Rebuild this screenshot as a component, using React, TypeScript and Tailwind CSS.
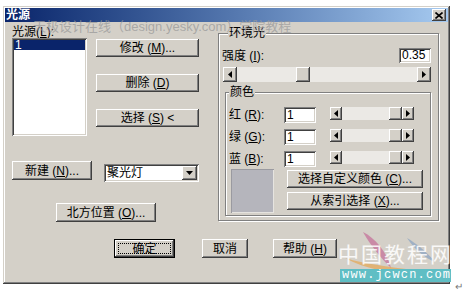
import React from "react"

const raised = "bg-[#d4d0c8] shadow-[inset_-1px_-1px_#404040,inset_1px_1px_#ffffff,inset_-2px_-2px_#808080,inset_2px_2px_#d4d0c8]"
const sunken = "bg-white shadow-[inset_1px_1px_#808080,inset_-1px_-1px_#ffffff,inset_2px_2px_#404040,inset_-2px_-2px_#d4d0c8]"
const etched = "border border-[#808080] shadow-[inset_1px_1px_#ffffff,1px_1px_#ffffff]"

function Btn({ w, h, children }: { w: string; h: string; children: React.ReactNode }) {
  return (
    <div className={`${raised} ${w} ${h} flex items-center justify-center text-[12px] leading-none text-black`}>
      {children}
    </div>
  )
}

function Arrow({ dir }: { dir: "l" | "r" | "d" }) {
  const pts = dir === "l" ? "4,0 0,3.5 4,7" : dir === "r" ? "0,0 4,3.5 0,7" : "0,0 7,0 3.5,4"
  const vb = dir === "d" ? "0 0 7 4" : "0 0 4 7"
  return (
    <svg viewBox={vb} className={dir === "d" ? "w-[7px] h-[4px]" : "w-[4px] h-[7px]"}>
      <polygon points={pts} fill="#000" />
    </svg>
  )
}

function Scroll({ w, h, arrow, before, thumb }: { w: string; h: string; arrow: string; before: string; thumb: string }) {
  return (
    <div className={`${w} ${h} flex bg-[#ebe9e5]`}>
      <div className={`${raised} ${arrow} h-full flex items-center justify-center`}><Arrow dir="l" /></div>
      <div className={before} />
      <div className={`${raised} ${thumb} h-full`} />
      <div className="flex-1" />
      <div className={`${raised} ${arrow} h-full flex items-center justify-center`}><Arrow dir="r" /></div>
    </div>
  )
}

function ColorRow({ label, k }: { label: string; k: string }) {
  return (
    <div className="flex items-start h-[16px]">
      <div className="w-[55px] text-[12px] leading-[16px]">{label} (<u>{k}</u>):</div>
      <div className={`${sunken} w-[32px] h-[16px] pl-[3px] text-[12px] leading-[16px]`}>1</div>
      <div className="ml-[14px]">
        <Scroll w="w-[84px]" h="h-[13px]" arrow="w-[12px]" before="w-[47px]" thumb="w-[13px]" />
      </div>
    </div>
  )
}

export default function App() {
  return (
    <div className="relative w-[465px] h-[296px] bg-white overflow-hidden font-['Liberation_Sans','Noto_Sans_CJK_SC',sans-serif] text-black">
      <div className="ml-[3px] mt-[6px] w-[447px] h-[278px] p-[2px] bg-[#d4d0c8] shadow-[inset_-1px_-1px_#404040,inset_1px_1px_#d4d0c8,inset_-2px_-2px_#808080,inset_2px_2px_#ffffff] flex flex-col">
        {/* title bar */}
        <div className="h-[14px] bg-linear-to-r from-[#0a246a] to-[#a6caf0] flex items-center justify-between pl-[1px] pr-[2px]">
          <span className="text-white font-bold text-[12px] leading-[14px]">光源</span>
          <div className={`${raised} w-[14px] h-[12px] flex items-center justify-center`}>
            <svg viewBox="0 0 8 7" className="w-[8px] h-[7px]">
              <path d="M0.5 0.5 L7.5 6.5 M7.5 0.5 L0.5 6.5" stroke="#000" strokeWidth="1.6" />
            </svg>
          </div>
        </div>

        <div className="flex">
          {/* left column */}
          <div className="w-[213px] flex flex-col">
            <div className="pl-[7px] pt-[4px] h-[16px] text-[12px] leading-[12px]">光源(<u>L</u>):</div>
            <div className="flex pl-[7px] gap-[9px]">
              <div className={`${sunken} w-[75px] h-[98px] p-[2px]`}>
                <div className="bg-[#0a246a] text-white text-[12px] leading-[10px] h-[10px] pl-[1px]">1</div>
              </div>
              <div className="pt-[1px] flex flex-col gap-[17px]">
                <Btn w="w-[103px]" h="h-[18px]">修改 (<u>M</u>)...</Btn>
                <Btn w="w-[103px]" h="h-[18px]">删除 (<u>D</u>)</Btn>
                <Btn w="w-[103px]" h="h-[18px]">选择 (<u>S</u>) &lt;</Btn>
              </div>
            </div>
            <div className="mt-[25px] flex items-start pl-[7px] gap-[12px]">
              <Btn w="w-[80px]" h="h-[19px]">新建 (<u>N</u>)...</Btn>
              <div className={`${sunken} mt-[3px] w-[95px] h-[18px] flex items-center justify-between pl-[3px] pr-[2px]`}>
                <span className="text-[12px] leading-none">聚光灯</span>
                <div className={`${raised} w-[15px] h-[14px] flex items-center justify-center`}><Arrow dir="d" /></div>
              </div>
            </div>
            <div className="mt-[21px] ml-[51px]">
              <Btn w="w-[100px]" h="h-[19px]">北方位置 (<u>O</u>)...</Btn>
            </div>
          </div>

          {/* ambient group */}
          <div className={`${etched} relative mt-[11px] w-[221px] h-[188px] pl-[3px] pr-[7px] pt-[14px]`}>
            <span className="absolute left-[9px] -top-[7px] px-[1px] bg-[#d4d0c8] text-[12px] leading-[12px]">环境光</span>
            <div className="flex justify-between items-center h-[15px]">
              <span className="text-[12px] leading-none">强度 (<u>I</u>):</span>
              <div className={`${sunken} w-[32px] h-[15px] pl-[3px] text-[12px] leading-[15px]`}>0.35</div>
            </div>
            <div className="mt-[4px] ml-[1px]">
              <Scroll w="w-[208px]" h="h-[15px]" arrow="w-[14px]" before="w-[59px]" thumb="w-[14px]" />
            </div>
            <div className={`${etched} relative mt-[10px] ml-[3px] w-[206px] h-[124px] pl-[3px] pt-[14px]`}>
              <span className="absolute left-[3px] -top-[7px] px-[1px] bg-[#d4d0c8] text-[12px] leading-[12px]">颜色</span>
              <div className="flex flex-col gap-[6px]">
                <ColorRow label="红" k="R" />
                <ColorRow label="绿" k="G" />
                <ColorRow label="蓝" k="B" />
              </div>
              <div className="mt-[2px] flex">
                <div className="ml-[2px] w-[43px] h-[44px] bg-[#b5b5bc] shadow-[inset_1px_1px_#9a9aa0,inset_-1px_-1px_#e6e4e0]" />
                <div className="ml-[13px] pt-[1px] flex flex-col gap-[4px]">
                  <Btn w="w-[136px]" h="h-[18px]">选择自定义颜色 (<u>C</u>)...</Btn>
                  <Btn w="w-[136px]" h="h-[18px]">从索引选择 (<u>X</u>)...</Btn>
                </div>
              </div>
            </div>
          </div>
        </div>

        {/* bottom buttons */}
        <div className="mt-[17px] flex pl-[109px]">
          <div className="w-[61px] h-[19px] border border-black">
            <div className={`${raised} w-full h-full p-[3px]`}>
              <div className="w-full h-full border border-dotted border-black flex items-center justify-center text-[12px] leading-none">确定</div>
            </div>
          </div>
          <div className="ml-[27px]"><Btn w="w-[46px]" h="h-[19px]">取消</Btn></div>
          <div className="ml-[25px]"><Btn w="w-[64px]" h="h-[19px]">帮助 (<u>H</u>)</Btn></div>
        </div>
      </div>

      {/* watermarks */}
      <div className="absolute left-[33px] top-[20px] text-[13px] leading-[14px] text-[#9a9a9a]/75 whitespace-nowrap pointer-events-none">
        天极设计在线（design.yesky.com）学院教程
      </div>
      <svg className="absolute left-[335px] top-[228px] w-[120px] h-[56px] pointer-events-none" viewBox="0 0 120 56">
        <path d="M28 4 C40 10 52 24 56 40 C46 30 36 18 28 4 Z" fill="#c0508a" opacity="0.55" />
        <path d="M10 30 C30 36 60 40 98 44 C70 48 36 44 10 30 Z" fill="#e8a040" opacity="0.6" />
        <path d="M72 10 C82 16 92 24 100 34 C90 30 80 22 72 10 Z" fill="#6a90c0" opacity="0.5" />
      </svg>
      <div className="absolute left-[338px] top-[241px] text-[21px] leading-[24px] tracking-[2px] text-white/85 whitespace-nowrap font-['Noto_Sans_CJK_SC',sans-serif] pointer-events-none">
        中国教程网
      </div>
      <div className="absolute left-[340px] top-[269px] w-[111px] h-[13px] bg-[#5fbec4] text-white text-[12px] leading-[13px] tracking-[1.2px] font-['Liberation_Mono',monospace] whitespace-nowrap overflow-hidden pl-[2px]">
        www.jcwcn.com
      </div>
      <div className="absolute left-[455px] top-[282px] text-[10px] leading-[10px] text-[#777]">↵</div>
    </div>
  )
}
